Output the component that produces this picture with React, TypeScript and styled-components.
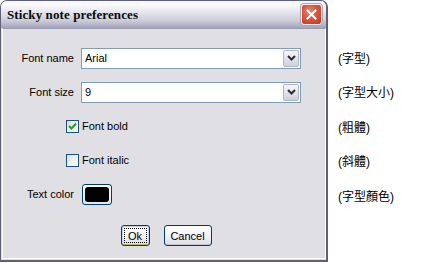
import React from "react";
import styled, { createGlobalStyle } from "styled-components";

const Global = createGlobalStyle`
  html, body { margin: 0; padding: 0; background: #ffffff; }
  body { font-family: "Liberation Sans", Arial, sans-serif; }
`;

const Page = styled.div`
  display: flex;
  align-items: flex-start;
  width: 425px;
  height: 263px;
  overflow: hidden;
`;

const Window = styled.div`
  width: 328px;
  height: 262px;
  box-sizing: border-box;
  display: flex;
  flex-direction: column;
  background: #e0dfe3;
  border: 1px solid #5e5f78;
  border-width: 1px 2px 2px 1px;
  border-radius: 7px 7px 0 0;
  overflow: hidden;
`;

const TitleBar = styled.div`
  height: 27px;
  flex: none;
  display: flex;
  align-items: center;
  justify-content: space-between;
  padding: 0 4px 0 6px;
  background: linear-gradient(
    to bottom,
    #f4f4f8 0%,
    #fbfbfd 12%,
    #e6e6ee 40%,
    #cfcfdc 70%,
    #b6b6c8 88%,
    #a3a3ba 100%
  );
`;

const Title = styled.span`
  font-family: "Liberation Serif", "Times New Roman", serif;
  font-weight: bold;
  font-size: 13px;
  color: #0a0a0a;
  letter-spacing: 0.1px;
`;

const CloseButton = styled.div`
  width: 19px;
  height: 19px;
  border: 1px solid #f4f0f0;
  border-radius: 3px;
  background: radial-gradient(circle at 40% 35%, #ec8a78 0%, #d8553c 45%, #c23b23 100%);
  display: flex;
  align-items: center;
  justify-content: center;
  box-shadow: 0 0 0 1px #b0a8b8;
`;

const Body = styled.div`
  flex: 1;
  display: flex;
  flex-direction: column;
  border-top: 1px solid #9a9ab2;
  border-left: 1px solid #ffffff;
  border-right: 1px solid #ffffff;
  border-bottom: 1px solid #ffffff;
  margin: 0 0 1px 1px;
  padding-top: 12px;
`;

const Row = styled.div`
  height: 34px;
  display: grid;
  grid-template-columns: 71px 1fr;
  column-gap: 7px;
  align-items: center;
`;

const Label = styled.span`
  text-align: right;
  font-size: 11px;
  color: #000;
`;

const Combo = styled.div`
  width: 220px;
  height: 21px;
  box-sizing: border-box;
  border: 1px solid #7f9db9;
  background: #fff;
  display: flex;
  align-items: center;
  justify-content: space-between;
  padding: 1px 1px 1px 3px;
  font-size: 11px;
  color: #000;
`;

const DropButton = styled.div`
  width: 16px;
  height: 17px;
  box-sizing: border-box;
  border: 1px solid #b4b4c8;
  border-radius: 2px;
  background: linear-gradient(to bottom, #f6f6fa 0%, #e2e2ea 55%, #cfcfdd 100%);
  display: flex;
  align-items: center;
  justify-content: center;
`;

const CheckWrap = styled.label`
  display: flex;
  align-items: center;
  gap: 3px;
  margin-left: -15px;
  font-size: 11px;
  color: #000;
`;

const CheckBox = styled.span`
  width: 13px;
  height: 13px;
  box-sizing: border-box;
  border: 1px solid #1c5180;
  background: linear-gradient(135deg, #dcdcd7 0%, #f4f4f2 60%, #ffffff 100%);
  display: flex;
  align-items: center;
  justify-content: center;
`;

const ColorButton = styled.div`
  width: 30px;
  height: 21px;
  box-sizing: border-box;
  border: 1px solid #003c74;
  border-radius: 3px;
  background: linear-gradient(to bottom, #ffffff, #e4e4ec);
  padding: 2px;
  margin-left: 1px;
`;

const Swatch = styled.div<{ $color: string }>`
  width: 100%;
  height: 100%;
  background: ${(p) => p.$color};
  border-radius: 3px;
`;

const ButtonRow = styled.div`
  display: flex;
  justify-content: center;
  gap: 14px;
  margin-top: 14px;
  padding-left: 4px;
`;

const Button = styled.div<{ $w: number; $default?: boolean }>`
  width: ${(p) => p.$w}px;
  height: 21px;
  box-sizing: border-box;
  border: 1px solid #003c74;
  border-radius: 3px;
  background: linear-gradient(to bottom, #ffffff 0%, #f4f4f8 50%, #dcdce6 100%);
  box-shadow: ${(p) =>
    p.$default ? "inset 0 -1px 0 #b8b870, inset 0 0 0 1px #c8d0e8" : "inset 0 -1px 0 #c4c4d4"};
  display: flex;
  align-items: center;
  justify-content: center;
  font-size: 11px;
  color: #000;
  padding: 2px;
`;

const Focus = styled.span`
  flex: 1;
  align-self: stretch;
  display: flex;
  align-items: center;
  justify-content: center;
  outline: 1px dotted #000;
  outline-offset: -1px;
`;

const Notes = styled.div`
  display: flex;
  flex-direction: column;
  margin-left: 10px;
  padding-top: 40px;
`;

const Note = styled.div`
  height: 34.5px;
  display: flex;
  align-items: center;
  font-family: "Liberation Sans", "Noto Sans CJK TC", sans-serif;
  font-size: 12px;
  color: #000;
`;

const Chevron = () => (
  <svg width="9" height="6" viewBox="0 0 9 6">
    <path d="M1 1 L4.5 4.5 L8 1" fill="none" stroke="#2b2b3a" strokeWidth="2" />
  </svg>
);

const Check = () => (
  <svg width="9" height="9" viewBox="0 0 9 9">
    <path d="M1 4 L3.5 6.5 L8 1.5" fill="none" stroke="#21a121" strokeWidth="2" />
  </svg>
);

const CloseX = () => (
  <svg width="11" height="11" viewBox="0 0 11 11">
    <path d="M1.5 1.5 L9.5 9.5 M9.5 1.5 L1.5 9.5" stroke="#ffffff" strokeWidth="2" strokeLinecap="square" />
  </svg>
);

export default function App() {
  return (
    <Page>
      <Global />
      <Window>
        <TitleBar>
          <Title>Sticky note preferences</Title>
          <CloseButton>
            <CloseX />
          </CloseButton>
        </TitleBar>
        <Body>
          <Row>
            <Label>Font name</Label>
            <Combo>
              <span>Arial</span>
              <DropButton>
                <Chevron />
              </DropButton>
            </Combo>
          </Row>
          <Row>
            <Label>Font size</Label>
            <Combo>
              <span>9</span>
              <DropButton>
                <Chevron />
              </DropButton>
            </Combo>
          </Row>
          <Row>
            <span />
            <CheckWrap>
              <CheckBox>
                <Check />
              </CheckBox>
              Font bold
            </CheckWrap>
          </Row>
          <Row>
            <span />
            <CheckWrap>
              <CheckBox />
              Font italic
            </CheckWrap>
          </Row>
          <Row>
            <Label>Text color</Label>
            <ColorButton>
              <Swatch $color="#000000" />
            </ColorButton>
          </Row>
          <ButtonRow>
            <Button $w={29} $default>
              <Focus>Ok</Focus>
            </Button>
            <Button $w={48}>Cancel</Button>
          </ButtonRow>
        </Body>
      </Window>
      <Notes>
        <Note>(字型)</Note>
        <Note>(字型大小)</Note>
        <Note>(粗體)</Note>
        <Note>(斜體)</Note>
        <Note>(字型顏色)</Note>
      </Notes>
    </Page>
  );
}
